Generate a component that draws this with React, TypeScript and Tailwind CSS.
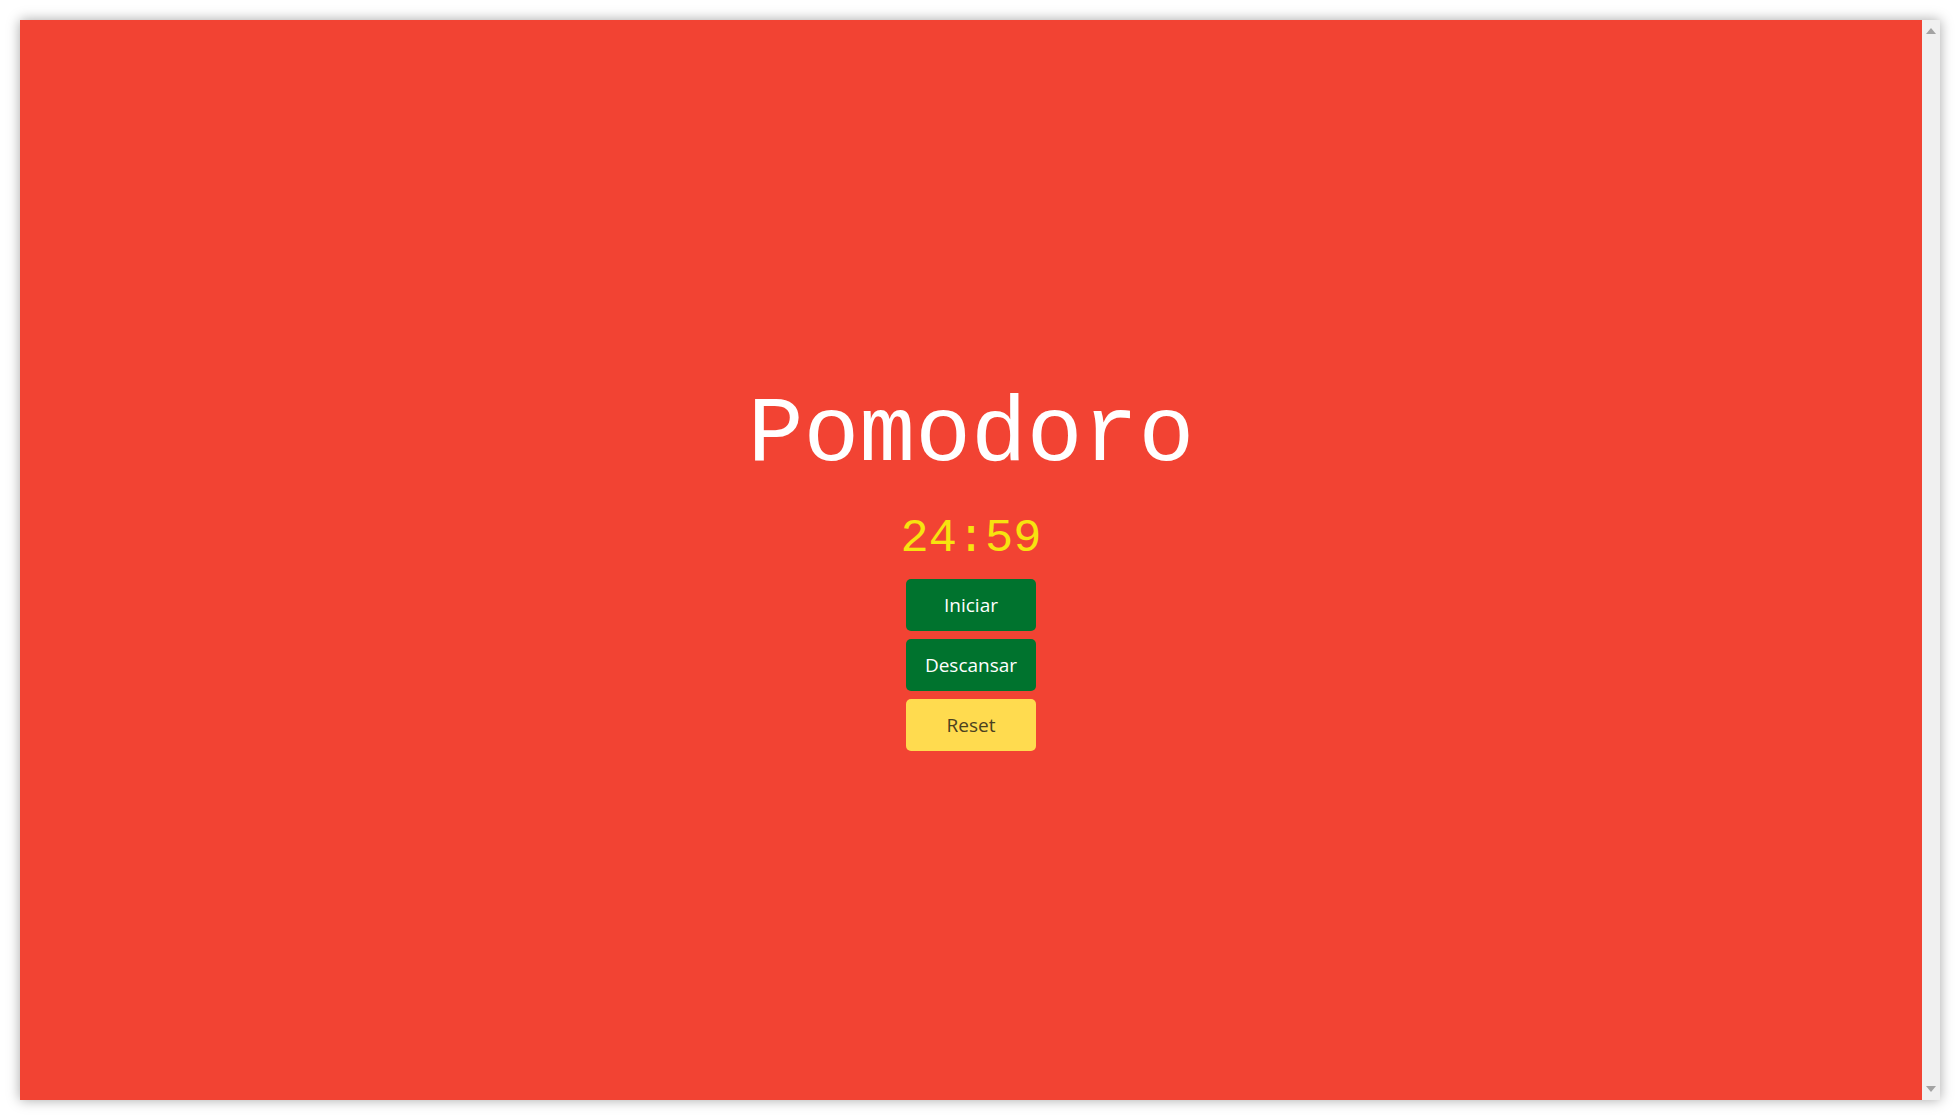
import React from "react";

export default function App() {
  return (
    <div className="w-[1960px] h-[1120px] bg-white p-[20px] overflow-hidden">
      <div className="w-[1920px] h-[1080px] flex shadow-[0_0_12px_rgba(0,0,0,0.35)]">
        <div className="flex-1 bg-[#f24333] flex flex-col items-center justify-center pt-[20px]">
          <h1 className="text-white text-[93px] leading-none font-['Liberation_Mono',monospace]">Pomodoro</h1>
          <div className="mt-[33px] text-[#f7e30f] text-[47px] leading-none font-['Liberation_Mono',monospace]">24:59</div>
          <div className="mt-[17px] flex flex-col gap-2">
            <button className="w-[130px] h-[52px] rounded-[5px] bg-[#00732e] text-white text-[19px] font-['Open_Sans',sans-serif]">Iniciar</button>
            <button className="w-[130px] h-[52px] rounded-[5px] bg-[#00732e] text-white text-[19px] font-['Open_Sans',sans-serif]">Descansar</button>
            <button className="w-[130px] h-[52px] rounded-[5px] bg-[#ffdb4f] text-[#4b4120] text-[19px] font-['Open_Sans',sans-serif]">Reset</button>
          </div>
        </div>
        <div className="w-[18px] bg-[#f0f0f0] flex flex-col items-center justify-between py-[8px]">
          <svg width="10" height="6" viewBox="0 0 10 6"><polygon points="5,0 10,6 0,6" fill="#a3a3a3" /></svg>
          <svg width="10" height="6" viewBox="0 0 10 6"><polygon points="0,0 10,0 5,6" fill="#a3a3a3" /></svg>
        </div>
      </div>
    </div>
  );
}
